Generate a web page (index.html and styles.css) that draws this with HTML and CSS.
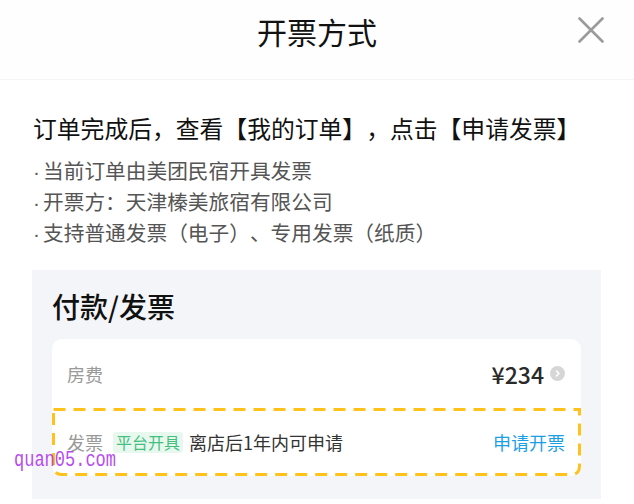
FILE: index.html
```html
<!DOCTYPE html>
<html lang="zh-CN">
<head>
    <meta charset="UTF-8">
    <meta name="viewport" content="width=device-width, initial-scale=1.0">
    <title>开票方式</title>
    <link rel="stylesheet" href="styles.css">
</head>
<body>
    <div class="sheet">
        <div class="header">
            <h1 class="title">开票方式</h1>
            <span class="close">
                <svg width="26" height="26" viewBox="0 0 26 26">
                    <path d="M1.5 1.5 L24.5 24.5 M24.5 1.5 L1.5 24.5" stroke="#9b9b9b" stroke-width="2.6" fill="none" stroke-linecap="round"/>
                </svg>
            </span>
        </div>
        <div class="intro">
            <p class="lead">订单完成后，查看【我的订单】，点击【申请发票】</p>
            <ul class="tips">
                <li><i>·</i>当前订单由美团民宿开具发票</li>
                <li><i>·</i>开票方：天津榛美旅宿有限公司</li>
                <li><i>·</i>支持普通发票（电子）、专用发票（纸质）</li>
            </ul>
        </div>
        <div class="panel">
            <h2 class="panel-title">付款/发票</h2>
            <div class="card">
                <div class="row">
                    <span class="label">房费</span>
                    <span class="price">¥234</span>
                    <span class="more">
                        <svg width="15" height="15" viewBox="0 0 15 15">
                            <circle cx="7.5" cy="7.5" r="7.5" fill="#d6d6d6"/>
                            <path d="M6.5 5 L8.9 7.5 L6.5 10" stroke="#fff" stroke-width="1.6" fill="none" stroke-linecap="round" stroke-linejoin="round"/>
                        </svg>
                    </span>
                </div>
                <div class="row invoice">
                    <svg class="dash" width="529" height="68" viewBox="0 0 529 68">
                        <path d="M1.5 1.5 H527.5 V58 Q527.5 66.5 519 66.5 H10 Q1.5 66.5 1.5 58 Z" stroke="#ffc21a" stroke-width="3" fill="none" stroke-dasharray="12 8"/>
                    </svg>
                    <span class="label">发票</span>
                    <span class="tag">平台开具</span>
                    <span class="desc">离店后1年内可申请</span>
                    <a class="apply">申请开票</a>
                </div>
            </div>
        </div>
    </div>
    <span class="mark">quan05.com</span>
</body>
</html>
```

FILE: styles.css
```css
*{
    margin: 0;
    padding: 0;
    box-sizing: border-box;
}
li{
    list-style: none;
}
body{
    width: 634px;
    height: 504px;
    overflow: hidden;
    background: #fff;
    font-family: "Noto Sans CJK SC", "Noto Sans", sans-serif;
    color: #222;
    position: relative;
    text-spacing-trim: space-all;
}
.header{
    height: 80px;
    display: flex;
    align-items: center;
    justify-content: center;
    position: relative;
    border-bottom: 1px solid #f4f4f4;
    background: #fefefe;
}
.title{
    font-size: 30px;
    font-weight: 400;
    color: #111;
    margin-top: -17px;
}
.close{
    position: absolute;
    right: 30px;
    top: 17px;
    width: 26px;
    height: 26px;
}
.close svg{
    display: block;
}
.intro{
    padding: 31px 33px 0;
}
.lead{
    font-size: 23.8px;
    line-height: 34px;
    color: #111;
    white-space: nowrap;
}
.tips{
    margin-top: 10px;
    font-size: 20.7px;
    line-height: 31px;
    color: #555;
    white-space: nowrap;
}
.tips li{
    height: 31px;
}
.tips i{
    font-style: normal;
    font-family: "Liberation Sans", sans-serif;
    display: inline-block;
    width: 10px;
}
.panel{
    margin: 22px 33px 0 32px;
    padding: 18px 20px 23px;
    background: #f3f5f8;
}
.panel-title{
    font-size: 28px;
    line-height: 36px;
    font-weight: 500;
    color: #111;
}
.card{
    margin-top: 15px;
    background: #fff;
    border-radius: 10px;
}
.row{
    height: 69px;
    display: flex;
    align-items: center;
    padding: 0 16px 0 15px;
    font-size: 18px;
}
.label{
    color: #999;
}
.price{
    margin-left: auto;
    font-size: 23px;
    font-weight: 500;
    color: #2a2a2a;
}
.more{
    margin-left: 6px;
    width: 15px;
    height: 15px;
}
.more svg{
    display: block;
}
.invoice{
    position: relative;
    height: 68px;
    padding: 0 16px 0 15px;
}
.dash{
    position: absolute;
    left: 0;
    top: 0;
}
.tag{
    margin-left: 10px;
    padding: 0 3px;
    height: 21px;
    line-height: 21px;
    font-size: 16px;
    color: #44c07e;
    background: #e8f8ef;
    border-radius: 3px;
}
.desc{
    margin-left: 6px;
    color: #333;
}
.apply{
    margin-left: auto;
    color: #1d9fe8;
}
.mark{
    position: absolute;
    left: 14px;
    top: 451px;
    font-family: "Liberation Mono", monospace;
    font-size: 17px;
    color: #b64cf0;
    transform: scaleY(1.3);
}
```
